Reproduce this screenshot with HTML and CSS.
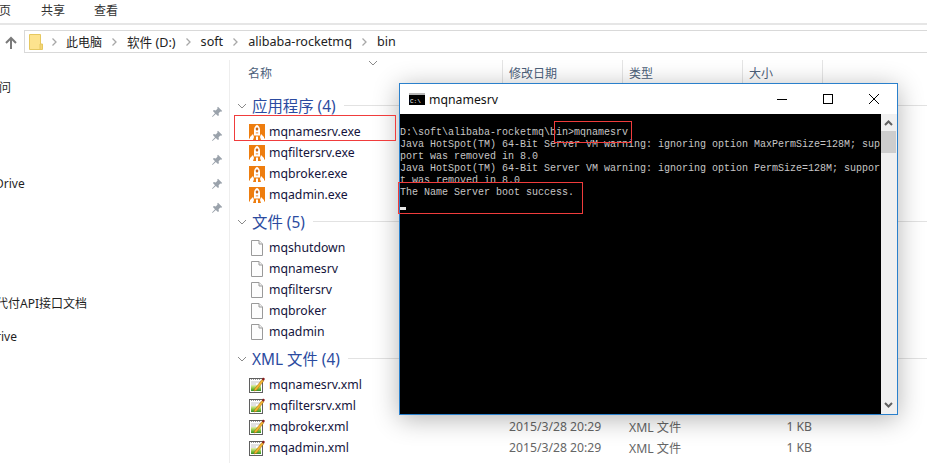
FILE: index.html
```html
<!DOCTYPE html>
<html lang="zh">
<head>
<meta charset="utf-8">
<title>bin</title>
<link rel="stylesheet" href="styles.css">
</head>
<body>
<svg class="defs" width="0" height="0" aria-hidden="true">
  <defs>
    <symbol id="rocket" viewBox="0 0 16 16">
      <rect width="16" height="16" fill="#ee7d0e"/>
      <path d="M8 .8c2 1.200 3 3 3 5.200v5.500H5V6C5 3.800 6 2 8 .8z" fill="#fff"/>
      <rect x="6.800" y="3.500" width="2.400" height="3" rx="1" fill="#c9661a"/>
      <rect x="6.800" y="8" width="2.400" height="1.600" fill="#f4b27a"/>
      <path d="M4 10 1 13v1.500H0V16h4l1-3zM12 10l3 3v1.500h1V16h-4l-1-3z" fill="#fff"/>
      <rect x="7" y="12.500" width="2" height="3.500" fill="#fff"/>
    </symbol>
    <symbol id="page" viewBox="0 0 16 16">
      <path d="M2.500.5h7.500l3.500 3.500v11.500h-11z" fill="#fdfdfd" stroke="#9a9a9a"/>
      <path d="M10 .5v3.500h3.500" fill="#efefef" stroke="#9a9a9a"/>
    </symbol>
    <linearGradient id="xmlfill" x1="0" y1="0" x2="0" y2="1">
      <stop offset="0" stop-color="#e6f0b0"/>
      <stop offset=".55" stop-color="#86c440"/>
      <stop offset="1" stop-color="#2f8f2a"/>
    </linearGradient>
    <symbol id="xml" viewBox="0 0 16 16">
      <rect x=".5" y="1.500" width="13" height="14" fill="#fff" stroke="#5f5f5f"/>
      <path d="M2 2.500h10" stroke="#9a9a9a" stroke-dasharray="1 1"/>
      <path d="M2 5h10M2 7h5" stroke="#c4c4c4"/>
      <rect x="2" y="8" width="10" height="6" fill="url(#xmlfill)"/>
      <path d="M5.500 12 13 2.500l1.800 1.300L7.500 13.200 5 14z" fill="#f2b632" stroke="#a86a10" stroke-width=".5"/>
      <path d="M13 2.500 14 .5 16 1.800l-1.200 2z" fill="#8a1c1c"/>
    </symbol>
    <symbol id="pin" viewBox="0 0 12 12">
      <path d="M7 .8 11.200 5l-1 .8-.8-.4L7.600 7.200l.3 2-.9.9L4.800 8 1.500 11 1 10.500 4 7.200 1.900 5l.9-.9 2 .3L6.600 2.600l-.4-.8z" fill="#9aa2ab"/>
    </symbol>
    <symbol id="down" viewBox="0 0 10 10">
      <path d="M1 3l4 4 4-4" fill="none" stroke="#8a8a8a"/>
    </symbol>
    <symbol id="sep" viewBox="0 0 8 10">
      <path d="M2.500 1.500 6 5 2.500 8.500" fill="none" stroke="#a8a8a8" stroke-width="1.300"/>
    </symbol>
  </defs>
</svg>

<div class="explorer">
  <nav class="ribbon">
    <span class="tab tab-cut">页</span>
    <span class="tab tab-share">共享</span>
    <span class="tab">查看</span>
  </nav>

  <div class="addressrow">
    <svg class="up" width="14" height="14" viewBox="0 0 14 14"><path d="M7 13V2M2 7l5-5 5 5" fill="none" stroke="#7a7a7a" stroke-width="2"/></svg>
    <div class="address">
      <svg class="folder" width="14" height="16" viewBox="0 0 14 16"><path d="M.5.500h11v15H.5z" fill="#fde38e" stroke="#e6c860"/><path d="M11 10h2.500v5.500H11z" fill="#f5d679" stroke="#e6c860"/></svg>
      <svg class="sep sep-first" width="8" height="10"><use href="#sep"/></svg>
      <span class="crumb crumb-zh">此电脑</span>
      <svg class="sep" width="8" height="10"><use href="#sep"/></svg>
      <span class="crumb">软件 (D:)</span>
      <svg class="sep" width="8" height="10"><use href="#sep"/></svg>
      <span class="crumb">soft</span>
      <svg class="sep" width="8" height="10"><use href="#sep"/></svg>
      <span class="crumb">alibaba-rocketmq</span>
      <svg class="sep" width="8" height="10"><use href="#sep"/></svg>
      <span class="crumb">bin</span>
    </div>
  </div>

  <div class="body">
    <aside class="sidebar">
      <div class="side-row"><span class="side-text cut-1">问</span></div>
      <div class="side-row"><svg class="pin" width="12" height="12"><use href="#pin"/></svg></div>
      <div class="side-row"><svg class="pin" width="12" height="12"><use href="#pin"/></svg></div>
      <div class="side-row"><svg class="pin" width="12" height="12"><use href="#pin"/></svg></div>
      <div class="side-row"><span class="side-text cut-2">Drive</span><svg class="pin" width="12" height="12"><use href="#pin"/></svg></div>
      <div class="side-row"><svg class="pin" width="12" height="12"><use href="#pin"/></svg></div>
      <div class="side-row side-far"><span class="side-text cut-3">代付API接口文档</span></div>
      <div class="side-row side-last"><span class="side-text cut-4">rive</span></div>
    </aside>

    <main class="files">
      <div class="headers">
        <span class="head head-name">名称<svg class="sort" width="10" height="10"><use href="#down"/></svg></span>
        <span class="head head-date">修改日期</span>
        <span class="head head-type">类型</span>
        <span class="head head-size">大小</span>
      </div>

      <section class="group">
        <h2 class="group-title"><svg class="caret" width="10" height="10"><use href="#down"/></svg>应用程序 (4)</h2>
        <div class="row"><svg class="icon" width="16" height="16"><use href="#rocket"/></svg><span class="name">mqnamesrv.exe</span></div>
        <div class="row"><svg class="icon" width="16" height="16"><use href="#rocket"/></svg><span class="name">mqfiltersrv.exe</span></div>
        <div class="row"><svg class="icon" width="16" height="16"><use href="#rocket"/></svg><span class="name">mqbroker.exe</span></div>
        <div class="row"><svg class="icon" width="16" height="16"><use href="#rocket"/></svg><span class="name">mqadmin.exe</span></div>
      </section>

      <section class="group">
        <h2 class="group-title"><svg class="caret" width="10" height="10"><use href="#down"/></svg>文件 (5)</h2>
        <div class="row"><svg class="icon" width="16" height="16"><use href="#page"/></svg><span class="name">mqshutdown</span></div>
        <div class="row"><svg class="icon" width="16" height="16"><use href="#page"/></svg><span class="name">mqnamesrv</span></div>
        <div class="row"><svg class="icon" width="16" height="16"><use href="#page"/></svg><span class="name">mqfiltersrv</span></div>
        <div class="row"><svg class="icon" width="16" height="16"><use href="#page"/></svg><span class="name">mqbroker</span></div>
        <div class="row"><svg class="icon" width="16" height="16"><use href="#page"/></svg><span class="name">mqadmin</span></div>
      </section>

      <section class="group">
        <h2 class="group-title"><svg class="caret" width="10" height="10"><use href="#down"/></svg>XML 文件 (4)</h2>
        <div class="row"><svg class="icon" width="16" height="16"><use href="#xml"/></svg><span class="name">mqnamesrv.xml</span></div>
        <div class="row"><svg class="icon" width="16" height="16"><use href="#xml"/></svg><span class="name">mqfiltersrv.xml</span></div>
        <div class="row"><svg class="icon" width="16" height="16"><use href="#xml"/></svg><span class="name">mqbroker.xml</span><span class="meta">2015/3/28 20:29</span><span class="meta">XML 文件</span><span class="meta meta-size">1 KB</span></div>
        <div class="row"><svg class="icon" width="16" height="16"><use href="#xml"/></svg><span class="name">mqadmin.xml</span><span class="meta">2015/3/28 20:29</span><span class="meta">XML 文件</span><span class="meta meta-size">1 KB</span></div>
      </section>
    </main>
  </div>
</div>

<div class="console">
  <header class="console-title">
    <svg class="console-icon" width="16" height="12" viewBox="0 0 16 12"><rect width="16" height="12" fill="#000"/><rect width="16" height="2" fill="#b8b8b8"/><text x="1" y="9.500" class="console-icon-text">C:\</text></svg>
    <span class="console-name">mqnamesrv</span>
    <span class="winbtns">
      <svg width="10" height="10" viewBox="0 0 10 10"><path d="M0 5.500h10" stroke="#000"/></svg>
      <svg width="10" height="10" viewBox="0 0 10 10"><rect x=".5" y=".5" width="9" height="9" fill="none" stroke="#000"/></svg>
      <svg width="10" height="10" viewBox="0 0 10 10"><path d="M0 0l10 10M10 0 0 10" stroke="#000"/></svg>
    </span>
  </header>
  <div class="console-body">
    <pre class="console-text">D:\soft\alibaba-rocketmq\bin&gt;mqnamesrv
Java HotSpot(TM) 64-Bit Server VM warning: ignoring option MaxPermSize=128M; sup
port was removed in 8.0
Java HotSpot(TM) 64-Bit Server VM warning: ignoring option PermSize=128M; suppor
t was removed in 8.0
The Name Server boot success.
<span class="cursor"></span></pre>
    <div class="scrollbar">
      <svg width="15" height="17" viewBox="0 0 15 17"><path d="M4 11l3.500-3.500L11 11" fill="none" stroke="#606060" stroke-width="2"/></svg>
      <div class="thumb"></div>
      <svg class="scroll-down" width="15" height="17" viewBox="0 0 15 17"><path d="M4 6l3.500 3.500L11 6" fill="none" stroke="#606060" stroke-width="2"/></svg>
    </div>
  </div>
</div>

<div class="mark mark-exe"></div>
<div class="mark mark-cmd"></div>
<div class="mark mark-ok"></div>
</body>
</html>
```

FILE: styles.css
```css
* { box-sizing: border-box; }
html, body { margin: 0; padding: 0; }
body {
  width: 927px;
  height: 463px;
  overflow: hidden;
  position: relative;
  background: #fff;
  font-family: "Noto Sans", "Noto Sans CJK SC", sans-serif;
  font-size: 12px;
  color: #1a1a1a;
}
.defs { position: absolute; }

.ribbon {
  height: 25px;
  display: flex;
  align-items: center;
  border-bottom: 2px solid #e6e6e6;
  padding-bottom: 3px;
  color: #333;
}
.tab { width: 53px; }
.tab-cut { width: 42px; margin-left: -1px; }

.addressrow {
  height: 23px;
  margin-top: 5px;
  display: flex;
  align-items: center;
}
.up { margin-left: 4px; margin-top: 2px; }
.address {
  margin-left: 6px;
  flex: 1;
  height: 23px;
  border: 1px solid #d9d9d9;
  border-right: 0;
  display: flex;
  align-items: center;
  padding-left: 4px;
  color: #222;
  font-size: 12.600px;
}
.folder { flex: none; }
.sep { flex: none; margin: 0 9px 0 8px; }
.sep-first { margin: 0 8px 0 7px; }
.crumb { white-space: nowrap; }
.crumb-zh { font-size: 12px; }

.body {
  display: flex;
  margin-top: 7px;
  height: 403px;
}
.sidebar {
  width: 230px;
  flex: none;
  border-right: 1px solid #eeeeee;
  padding-top: 15px;
  overflow: hidden;
}
.side-row {
  height: 24px;
  display: flex;
  align-items: center;
  justify-content: flex-end;
  padding-right: 6px;
  position: relative;
}
.side-far { margin-top: 72px; }
.side-last { margin-top: 9px; }
.side-text { margin-right: auto; white-space: nowrap; color: #1f1f1f; }
.pin { margin-top: 2px; }
.cut-1 { margin-left: -1px; }
.cut-2 { margin-left: -5px; }
.cut-3 { margin-left: -4px; }
.cut-4 { margin-left: -4px; }

.files { flex: 1; min-width: 0; }
.headers {
  height: 24px;
  display: flex;
  align-items: center;
  color: #4c607a;
}
.head {
  height: 24px;
  display: flex;
  align-items: center;
  padding-left: 6px;
  padding-top: 2px;
  border-right: 1px solid #e5e5e5;
  position: relative;
}
.head-name { width: 273px; padding-left: 18px; }
.head-date { width: 120px; }
.head-type { width: 120px; }
.head-size { width: 80px; }
.sort { position: absolute; left: 138px; top: -2px; }

.group-title {
  margin: 0 0 3px;
  height: 25px;
  padding-left: 7px;
  display: flex;
  align-items: center;
  font-size: 15.400px;
  font-weight: 400;
  color: #2b4ba0;
  white-space: nowrap;
}
.group-title::after {
  content: "";
  flex: 1;
  height: 1px;
  margin-left: 8px;
  background: #e2e2e2;
}
.group:first-of-type { margin-top: 9px; }
.group + .group { margin-top: 4px; }
.caret { margin-right: 5px; }

.row {
  height: 21px;
  display: grid;
  grid-template-columns: 16px 244px 120px 120px 63px;
  align-items: center;
  padding-left: 19px;
  color: #14143c;
}
.icon { display: block; }
.name { padding-left: 4px; white-space: nowrap; font-size: 12.250px; }
.meta { color: #666; white-space: nowrap; font-size: 12.200px; }
.meta-size { text-align: right; }

.console {
  position: absolute;
  left: 399px;
  top: 83px;
  width: 499px;
  height: 332px;
  background: #fff;
  border: 1px solid #2a80cc;
  box-shadow: 0 4px 24px rgba(0, 0, 0, 0.3);
  display: flex;
  flex-direction: column;
}
.console-title {
  height: 30px;
  flex: none;
  display: flex;
  align-items: center;
  padding-left: 9px;
  color: #111;
}
.console-icon-text { font-family: "Liberation Mono", monospace; font-size: 6px; fill: #fff; }
.console-name { margin-left: 4px; font-size: 12.250px; }
.winbtns {
  margin-left: auto;
  margin-right: 18px;
  display: flex;
  gap: 36px;
  align-items: center;
}
.console-body { flex: 1; display: flex; min-height: 0; }
.console-text {
  margin: 0;
  flex: 1;
  min-width: 0;
  overflow: hidden;
  background: #000;
  color: #c6c6c6;
  padding-top: 13px;
  font-family: "Liberation Mono", monospace;
  font-size: 10px;
  line-height: 12px;
  white-space: pre;
}
.cursor {
  display: inline-block;
  width: 6px;
  height: 3px;
  background: #e6e6e6;
  vertical-align: -3px;
}
.scrollbar {
  width: 16px;
  flex: none;
  background: #f0f0f0;
  display: flex;
  flex-direction: column;
}
.thumb { height: 22px; background: #cdcdcd; margin-right: 1px; }
.scroll-down { margin-top: auto; }

.mark {
  position: absolute;
  border: 1px solid #f03c3c;
}
.mark-exe { left: 234px; top: 115px; width: 162px; height: 26px; }
.mark-cmd { left: 554px; top: 121px; width: 78px; height: 22px; }
.mark-ok { left: 398px; top: 182px; width: 185px; height: 32px; }
```
